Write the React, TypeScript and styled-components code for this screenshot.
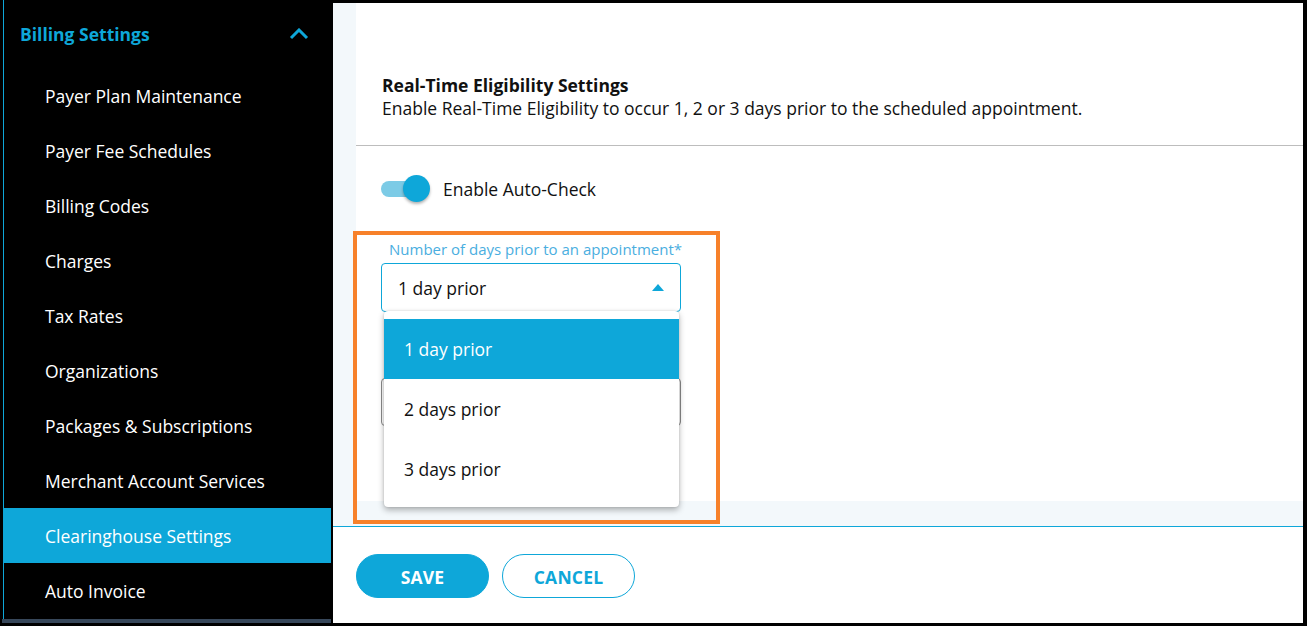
import React from "react";
import styled, { createGlobalStyle } from "styled-components";

const BLUE = "#0ea7d9";

const Global = createGlobalStyle`
  html, body { margin: 0; padding: 0; background: #000; }
  body { font-family: "Open Sans", "Liberation Sans", sans-serif; }
  * { box-sizing: border-box; }
`;

const Frame = styled.div`
  width: 1307px;
  height: 626px;
  background: #000;
  display: flex;
  overflow: hidden;
`;

const Sidebar = styled.nav`
  width: 333px;
  flex: none;
  padding: 0 2px 0 3px;
  display: flex;
  flex-direction: column;
`;

const SideInner = styled.div`
  border-left: 1px solid ${BLUE};
  display: flex;
  flex-direction: column;
  height: 619px;
`;

const SideHeader = styled.div`
  height: 68px;
  display: flex;
  align-items: center;
  justify-content: space-between;
  padding: 0 22px 0 16px;
  color: ${BLUE};
  font-weight: 700;
  font-size: 17.5px;
`;

const SideItem = styled.div<{ $active?: boolean }>`
  height: 55px;
  flex: none;
  display: flex;
  align-items: center;
  padding-left: 41px;
  font-size: 17.5px;
  color: #fff;
  background: ${(p) => (p.$active ? BLUE : "transparent")};
`;

const SideBottom = styled.div`
  margin-left: -1px;
  height: 4px;
  background: #37475a;
`;

const Main = styled.main`
  flex: 1;
  margin: 3px 4px 3px 0;
  display: flex;
  flex-direction: column;
  background: #fff;
  position: relative;
`;

const Content = styled.section`
  flex: 1;
  background: #f3f8fb;
  padding: 0 0 25px 23px;
  display: flex;
`;

const Card = styled.div`
  flex: 1;
  background: #fff;
  display: flex;
  flex-direction: column;
`;

const CardHead = styled.header`
  height: 143px;
  border-bottom: 1px solid #bdbdbd;
  padding: 71px 0 0 26px;
  color: #111;
  font-size: 17.5px;
  line-height: 23px;
`;

const Title = styled.div`
  font-weight: 700;
`;

const Body = styled.div`
  padding: 28px 0 0 25px;
  display: flex;
  flex-direction: column;
`;

const ToggleRow = styled.div`
  display: flex;
  align-items: center;
  gap: 14px;
  font-size: 17.5px;
  color: #111;
  height: 30px;
`;

const Toggle = styled.div`
  position: relative;
  width: 48px;
  height: 16px;
  border-radius: 8px;
  background: #7ccbe6;
`;

const Knob = styled.div`
  position: absolute;
  right: -1px;
  top: -6px;
  width: 27px;
  height: 27px;
  border-radius: 50%;
  background: ${BLUE};
  box-shadow: 0 2px 3px rgba(0, 0, 0, 0.3);
`;

const Field = styled.div`
  margin-top: 36px;
  width: 300px;
  position: relative;
`;

const Label = styled.div`
  font-size: 15px;
  color: #4aaee0;
  padding-left: 8px;
  line-height: 18px;
  margin-bottom: 5px;
  white-space: nowrap;
`;

const Select = styled.div<{ $focused?: boolean }>`
  height: 49px;
  border: ${(p) => (p.$focused ? `1.5px solid ${BLUE}` : "1px solid #8a8a8a")};
  border-radius: 4px;
  display: flex;
  align-items: center;
  justify-content: space-between;
  padding: 0 16px 0 16px;
  font-size: 17.5px;
  color: #111;
  background: #fff;
`;

const Caret = styled.span`
  width: 0;
  height: 0;
  border-left: 6px solid transparent;
  border-right: 6px solid transparent;
  border-bottom: 7px solid ${BLUE};
`;

const SecondSelect = styled(Select)`
  margin-top: 66px;
  height: 48px;
`;

const Menu = styled.div`
  position: absolute;
  left: 3px;
  top: 71px;
  width: 295px;
  background: #fff;
  border-radius: 4px;
  padding: 8px 0;
  box-shadow: 0 3px 6px rgba(0, 0, 0, 0.3), 0 0 2px rgba(0, 0, 0, 0.15);
  z-index: 2;
`;

const Option = styled.div<{ $selected?: boolean }>`
  height: 60px;
  display: flex;
  align-items: center;
  padding-left: 20px;
  font-size: 17.5px;
  color: ${(p) => (p.$selected ? "#fff" : "#111")};
  background: ${(p) => (p.$selected ? BLUE : "#fff")};
`;

const Highlight = styled.div`
  position: absolute;
  left: 20px;
  top: 228px;
  width: 367px;
  height: 293px;
  border: 4px solid #f7812a;
  z-index: 3;
  pointer-events: none;
`;

const Footer = styled.footer`
  flex: none;
  height: 97px;
  border-top: 1.5px solid ${BLUE};
  padding: 27px 0 0 23px;
  display: flex;
  gap: 13px;
  align-items: flex-start;
`;

const Button = styled.button<{ $primary?: boolean }>`
  width: 133px;
  height: 44px;
  border-radius: 22px;
  border: 1px solid ${BLUE};
  background: ${(p) => (p.$primary ? BLUE : "#fff")};
  color: ${(p) => (p.$primary ? "#fff" : BLUE)};
  font-family: "Open Sans", "Liberation Sans", sans-serif;
  font-weight: 700;
  font-size: 17.5px;
  letter-spacing: 0.2px;
  padding-top: 2px;
`;

const items = [
  "Payer Plan Maintenance",
  "Payer Fee Schedules",
  "Billing Codes",
  "Charges",
  "Tax Rates",
  "Organizations",
  "Packages & Subscriptions",
  "Merchant Account Services",
  "Clearinghouse Settings",
  "Auto Invoice",
];

export default function App() {
  return (
    <>
      <Global />
      <Frame>
        <Sidebar>
          <SideInner>
            <SideHeader>
              <span>Billing Settings</span>
              <svg width="20" height="12" viewBox="0 0 20 12">
                <path d="M2 10 L10 2 L18 10" fill="none" stroke={BLUE} strokeWidth="3" />
              </svg>
            </SideHeader>
            {items.map((t) => (
              <SideItem key={t} $active={t === "Clearinghouse Settings"}>
                {t}
              </SideItem>
            ))}
          </SideInner>
          <SideBottom />
        </Sidebar>
        <Main>
          <Content>
            <Card>
              <CardHead>
                <Title>Real-Time Eligibility Settings</Title>
                <div>Enable Real-Time Eligibility to occur 1, 2 or 3 days prior to the scheduled appointment.</div>
              </CardHead>
              <Body>
                <ToggleRow>
                  <Toggle>
                    <Knob />
                  </Toggle>
                  <span>Enable Auto-Check</span>
                </ToggleRow>
                <Field>
                  <Label>Number of days prior to an appointment*</Label>
                  <Select $focused>
                    <span>1 day prior</span>
                    <Caret />
                  </Select>
                  <Menu>
                    <Option $selected>1 day prior</Option>
                    <Option>2 days prior</Option>
                    <Option>3 days prior</Option>
                  </Menu>
                  <SecondSelect />
                </Field>
              </Body>
            </Card>
          </Content>
          <Footer>
            <Button $primary>SAVE</Button>
            <Button>CANCEL</Button>
          </Footer>
          <Highlight />
        </Main>
      </Frame>
    </>
  );
}
